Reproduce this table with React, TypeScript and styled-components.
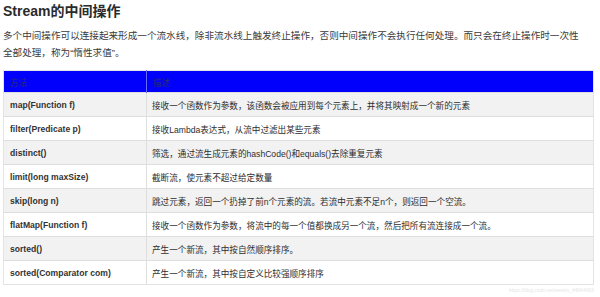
import React, { FC } from 'react';
import styled, { createGlobalStyle } from 'styled-components';

const GlobalStyle = createGlobalStyle`
  html, body {
    margin: 0;
    padding: 0;
    background: #fff;
  }
  body {
    font-family: "Liberation Sans", "Noto Sans CJK SC", sans-serif;
    color: #333;
  }
`;

const Page = styled.div`
  width: 600px;
  height: 297px;
  box-sizing: border-box;
  padding: 0 6px 0 3px;
  overflow: hidden;
`;

const Title = styled.h2`
  margin: 0;
  padding-top: 1px;
  font-size: 14px;
  line-height: 20px;
  font-weight: bold;
  color: #2b2b2b;
`;

const Intro = styled.p`
  margin: 6px 0 0;
  font-size: 9.6px;
  line-height: 17px;
  color: #3a3a3a;
  width: 584px;
`;

const StyledTable = styled.table`
  margin-top: 9px;
  width: 591px;
  border-collapse: collapse;
  table-layout: fixed;
  border: 1px solid #e4e4e4;
`;

const HeadRow = styled.tr`
  height: 22px;
  background: #0000fc;
`;

const HeadCell = styled.th<{ $width?: number }>`
  width: ${props => (props.$width ? `${props.$width}px` : 'auto')};
  padding: 0 0 0 6px;
  text-align: left;
  font-size: 8.6px;
  font-weight: normal;
  color: #2a2a7a;
  border-right: 1px solid #6a6aff;

  &:last-child {
    border-right: 0;
  }
`;

const BodyRow = styled.tr<{ $shade: boolean }>`
  height: 24px;
  background: ${props => (props.$shade ? '#f2f2f2' : '#fff')};
  border-top: 1px solid #dedede;
`;

const MethodCell = styled.td`
  padding: 0 0 0 6px;
  font-size: 8.6px;
  font-weight: bold;
  color: #333;
  border-right: 1px solid #dedede;
  white-space: nowrap;
`;

const DescCell = styled.td`
  padding: 0 0 0 5px;
  font-size: 8.6px;
  color: #2e2e2e;
  white-space: nowrap;
`;

const Watermark = styled.div`
  margin-top: 2px;
  text-align: right;
  font-size: 5px;
  color: #e6e6e6;
`;

const rows = [
  ['map(Function f)', '接收一个函数作为参数，该函数会被应用到每个元素上，并将其映射成一个新的元素'],
  ['filter(Predicate p)', '接收Lambda表达式，从流中过滤出某些元素'],
  ['distinct()', '筛选，通过流生成元素的hashCode()和equals()去除重复元素'],
  ['limit(long maxSize)', '截断流，使元素不超过给定数量'],
  ['skip(long n)', '跳过元素，返回一个扔掉了前n个元素的流。若流中元素不足n个，则返回一个空流。'],
  ['flatMap(Function f)', '接收一个函数作为参数，将流中的每一个值都换成另一个流，然后把所有流连接成一个流。'],
  ['sorted()', '产生一个新流，其中按自然顺序排序。'],
  ['sorted(Comparator com)', '产生一个新流，其中按自定义比较强顺序排序'],
];

const App: FC = () => {
  return (
    <Page>
      <GlobalStyle />
      <Title>Stream的中间操作</Title>
      <Intro>
        多个中间操作可以连接起来形成一个流水线，除非流水线上触发终止操作，否则中间操作不会执行任何处理。而只会在终止操作时一次性全部处理，称为“惰性求值”。
      </Intro>
      <StyledTable>
        <thead>
          <HeadRow>
            <HeadCell $width={136}>方法</HeadCell>
            <HeadCell>描述</HeadCell>
          </HeadRow>
        </thead>
        <tbody>
          {rows.map(([method, desc], i) => (
            <BodyRow key={method} $shade={i % 2 === 0}>
              <MethodCell>{method}</MethodCell>
              <DescCell>{desc}</DescCell>
            </BodyRow>
          ))}
        </tbody>
      </StyledTable>
      <Watermark>https://blog.csdn.net/weixin_44644403</Watermark>
    </Page>
  );
};

export default App;
